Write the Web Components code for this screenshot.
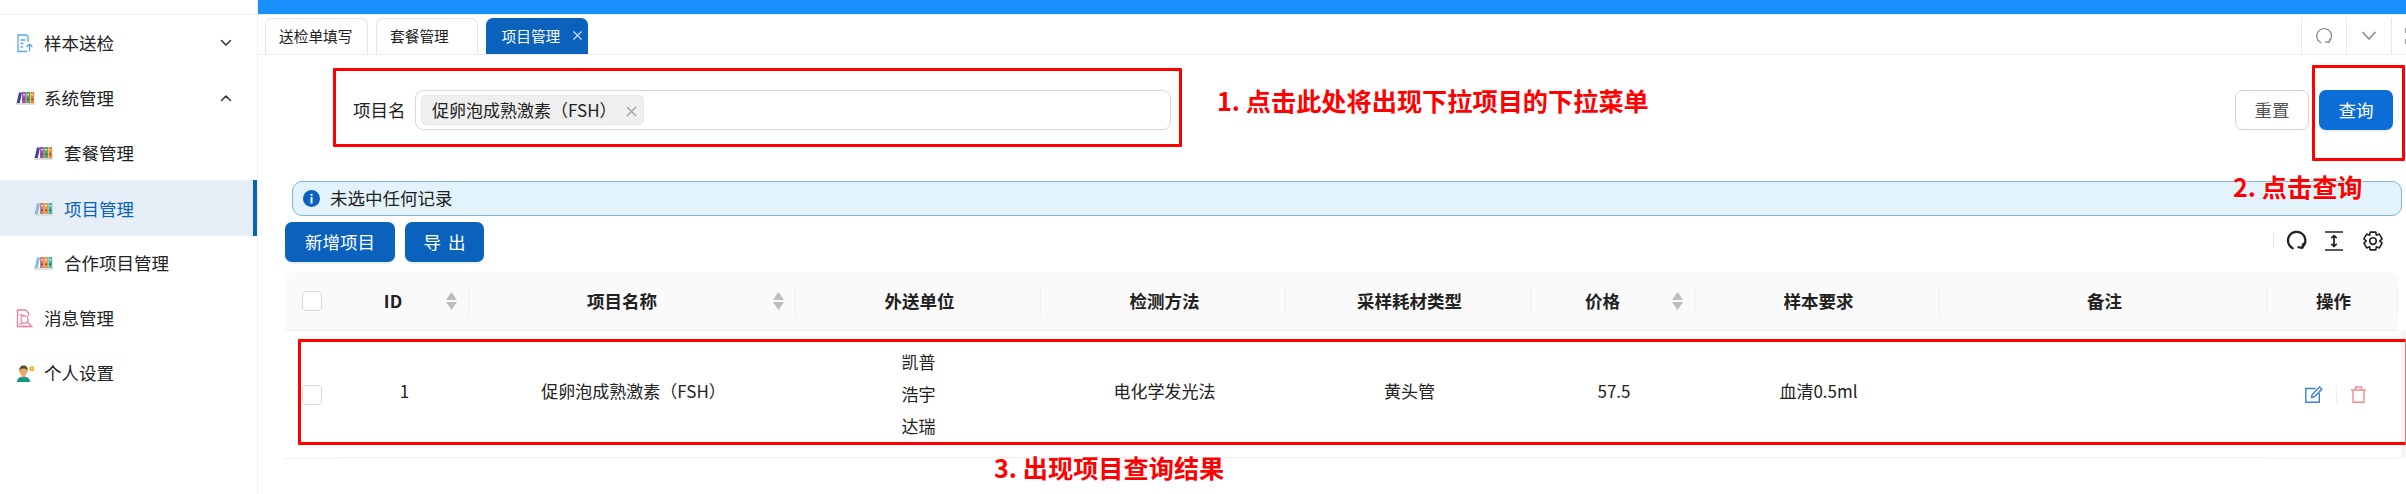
<!DOCTYPE html>
<html lang="zh">
<head>
<meta charset="utf-8">
<title>项目管理</title>
<style>
html,body{margin:0;padding:0;background:#fff}
</style>
</head>
<body>
<app-shell>
  <side-nav slot="side">
    <nav-item icon="doc" chevron="down">样本送检</nav-item>
    <nav-item icon="binder" chevron="up">系统管理</nav-item>
    <nav-item icon="binder" sub>套餐管理</nav-item>
    <nav-item icon="binder-light" sub active>项目管理</nav-item>
    <nav-item icon="binder-light" sub>合作项目管理</nav-item>
    <nav-item icon="search-doc">消息管理</nav-item>
    <nav-item icon="person">个人设置</nav-item>
  </side-nav>
  <top-strip slot="main"></top-strip>
  <tab-bar slot="main">
    <tab-chip w="103">送检单填写</tab-chip>
    <tab-chip w="102">套餐管理</tab-chip>
    <tab-chip w="102" active>项目管理</tab-chip>
  </tab-bar>
  <filter-form slot="main"></filter-form>
  <alert-bar slot="main">未选中任何记录</alert-bar>
  <action-bar slot="main"></action-bar>
  <data-table slot="main"></data-table>

  <red-box style="left:333px;top:68px;width:849px;height:79px"></red-box>
  <red-box style="left:2312px;top:65px;width:93px;height:96px"></red-box>
  <red-box style="left:298px;top:339px;width:2108px;height:106px;border-right:1px solid #e77"></red-box>
  <red-note style="left:1217px;top:101px">1. 点击此处将出现下拉项目的下拉菜单</red-note>
  <red-note style="left:2233px;top:187px">2. 点击查询</red-note>
  <red-note style="left:994px;top:468px">3. 出现项目查询结果</red-note>
</app-shell>
<script>
const FONT = '"Noto Sans CJK SC","Noto Sans",sans-serif';
const CTL = 'display:block';

function binder(a,b,c,d,e,base){
  return `<svg width="19" height="13" viewBox="0 0 19 13" style="${CTL}">
    <path d="M3 .5h3L3.800 11H.6z" fill="${a}"/><rect x="6" y="0" width="3.800" height="11" fill="${b}"/>
    <rect x="10.200" y="0" width="3.800" height="11" fill="${c}"/><rect x="14.400" y="0" width="3.800" height="11" fill="${d}"/>
    <rect x="7" y="2" width="1.800" height="1.400" fill="#fff" opacity=".8"/><rect x="11.200" y="2" width="1.800" height="1.400" fill="#fff" opacity=".8"/><rect x="15.400" y="2" width="1.800" height="1.400" fill="#fff" opacity=".8"/>
    <rect x="7" y="6.500" width="1.800" height="1.600" fill="${e}"/><rect x="11.200" y="6.500" width="1.800" height="1.600" fill="${e}"/><rect x="15.400" y="6.500" width="1.800" height="1.600" fill="${e}"/>
    <rect x="0" y="11" width="19" height="1.800" fill="${base}"/></svg>`;
}
const ICONS = {
  doc:`<svg width="18" height="19" viewBox="0 0 18 19" fill="none" stroke="#5ba2f2" stroke-width="1.3" style="${CTL}">
    <path d="M12 8V2.6L10.2 1H2v16.5h9"/><path d="M4.5 6h5M4.5 9.5h3M4.5 13h2.5"/><path d="M13.5 17.5V10.5M10.6 13l2.9-2.9 2.9 2.9"/></svg>`,
  binder:binder('#3f4192','#a24fb2','#5aa64f','#e58a3a','#555','#d9d4d0'),
  'binder-light':binder('#86bcdc','#e2786f','#e2a04d','#4fb3a6','#555','#d8dde2'),
  'search-doc':`<svg width="18" height="19" viewBox="0 0 18 19" fill="none" stroke="#ec7f9c" stroke-width="1.3" style="${CTL}">
    <path d="M11 17.5H1.5V1h8l3 3v3"/><circle cx="8.5" cy="10.5" r="3.6"/><path d="M11.2 13l4.5 4.5H7"/><path d="M3.5 6h4M3.5 15h3"/></svg>`,
  person:`<svg width="19" height="18" viewBox="0 0 19 18" style="${CTL}">
    <path d="M1 17c0-3.5 2.6-5.2 6.5-5.2S14 13.500 14 17z" fill="#0f9787"/>
    <rect x="5.800" y="9" width="3.400" height="3.500" fill="#d99a5e"/>
    <ellipse cx="7.500" cy="6.200" rx="3.900" ry="4.400" fill="#eca867"/>
    <path d="M3.400 6.500C2.800 2.200 5.200 .5 7.700 .5c2.700 0 4.500 2 3.900 5.300C10.800 3.700 9 3.400 7 3.500 5 3.500 3.900 4.400 3.400 6.500z" fill="#5b4636"/>
    <circle cx="15.800" cy="3.800" r="2.500" fill="#f6ad1b"/><circle cx="15.800" cy="3.800" r="1" fill="#ffe27a"/></svg>`
};
const RELOAD = (c,s,w)=>`<svg width="${s}" height="${s}" viewBox="0 0 20 20" fill="none" stroke="${c}" stroke-width="${w}" stroke-linecap="round" stroke-linejoin="round" style="${CTL}">
  <path d="M6.500 17.500A8.300 8.300 0 1 1 15.600 16.300"/><path d="M16.500 13.200l-1 3.800-3.700-.6"/></svg>`;
function gearPath(cx,cy){
  let d='';const n=6,R=10.2,r=7.6;
  for(let i=0;i<n;i++){
    const a=(i*60-90)*Math.PI/180,w=.30,v=.50;
    const p=(rad,ang)=>`${(cx+rad*Math.cos(ang)).toFixed(2)} ${(cy+rad*Math.sin(ang)).toFixed(2)}`;
    d+=(i?'L':'M')+p(r,a-v)+'L'+p(R,a-w)+'L'+p(R,a+w)+'L'+p(r,a+v);
    d+='Q'+p(r*.93,a+Math.PI/6)+' '+p(r,a+Math.PI/3-v);
  }
  return d+'Z';
}

const def=(name,render)=>customElements.define(name,class extends HTMLElement{
  connectedCallback(){
    if(this.shadowRoot) return;
    this.attachShadow({mode:'open'}).innerHTML=render(this);
  }
});

def('app-shell',()=>`<style>
  :host{display:flex;position:relative;width:2406px;height:494px;overflow:hidden;background:#fff;color:#222;
    font-family:${FONT};font-size:17px;line-height:1.4}
  .side{flex:0 0 257px;display:block}
  .main{flex:1;min-width:0;display:flex;flex-direction:column}
</style>
<div class="side"><slot name="side"></slot></div>
<div class="main"><slot name="main"></slot></div>
<slot></slot>`);

def('side-nav',()=>`<style>
  :host{display:block;width:258px;box-sizing:border-box;height:494px;border-right:1px solid #f1f1f1;background:#fff;padding-top:15px;position:relative}
  :host::before{content:"";position:absolute;left:0;right:0;top:14px;height:1px;background:#eee}
</style><slot></slot>`);

def('nav-item',el=>{
  const sub=el.hasAttribute('sub'),active=el.hasAttribute('active'),ch=el.getAttribute('chevron');
  const chev=ch?`<svg class="chev" width="12" height="8" viewBox="0 0 12 8" fill="none" stroke="#333" stroke-width="1.5" stroke-linecap="round" stroke-linejoin="round"><path d="${ch==='down'?'M1.500 1.500L6 6l4.500-4.500':'M1.500 6.500L6 2l4.500 4.500'}"/></svg>`:'';
  return `<style>
    :host{display:flex;align-items:center;height:55px;box-sizing:border-box;position:relative;font-size:17.5px;padding-top:2px;
      padding-left:${sub?34:16}px;color:${active?'#0a62bd':'#222'};background:${active?'#e6eff8':'transparent'};
      ${active?'border-right:4px solid #0a62bd;width:257px;height:56px;margin-bottom:-1px;':''}}
    .ic{width:${sub?30:28}px;flex:none}
    .chev{position:absolute;left:220px;top:50%;margin-top:-4px}
  </style><span class="ic">${ICONS[el.getAttribute('icon')]}</span><slot></slot>${chev}`;
});

def('top-strip',()=>`<style>:host{display:block;height:14px;background:#1890ff;border-bottom:1px solid #eee;flex:none}</style>`);

def('tab-bar',()=>`<style>
  :host{display:flex;align-items:flex-end;height:39px;box-sizing:content-box;border-bottom:1px solid #eee;padding-left:7px;gap:8px;flex:none;margin-left:0}
  .tools{margin-left:auto;margin-right:-30px;display:flex;height:36px}
  .tools span{width:45px;box-sizing:border-box;border-left:1px solid #e8e8e8;display:flex;align-items:center;justify-content:center}
</style><slot></slot>
<div class="tools">
  <span>${RELOAD('#8a93a3',18,1.5)}</span>
  <span><svg width="16" height="10" viewBox="0 0 16 10" fill="none" stroke="#8a93a3" stroke-width="1.800" stroke-linecap="round" stroke-linejoin="round"><path d="M2 1.500L8 8l6-6.500"/></svg></span>
  <span><svg width="18" height="16" viewBox="0 0 18 16" fill="none" stroke="#8a93a3" stroke-width="1.800" style="${CTL}"><path d="M1 5V1h4M13 1h4v4M1 11v4h4M13 15h4v-4"/></svg></span>
</div>`);

def('tab-chip',el=>{
  const a=el.hasAttribute('active');
  return `<style>
    :host{display:flex;align-items:center;box-sizing:border-box;width:${el.getAttribute('w')}px;height:36px;padding:0 0 1px ${a?14.5:13}px;font-size:14.700px;
      border:1px solid ${a?'#0a62bd':'#e4e4e4'};border-bottom:0;border-radius:7px 7px 0 0;
      background:${a?'#0a62bd':'#fff'};color:${a?'#fff':'#222'};position:relative}
    svg{position:absolute;left:85px;top:11px}
  </style><slot></slot>${a?'<svg width="11" height="11" viewBox="0 0 11 11" stroke="#cfe2f7" stroke-width="1.200"><path d="M1.500 1.500l8 8M9.500 1.500l-8 8"/></svg>':''}`;
});

def('app-button',el=>{
  const k=el.getAttribute('kind');
  const st={primary:'background:#0a62bd;color:#fff;border:0;box-shadow:0 2px 0 #e8f3fd;',
    query:'background:#0d6dd6;color:#fff;border:0;box-shadow:0 2px 0 #e8f3fd;',
    ghost:'background:#fff;color:#555;border:1px solid #d4d4d4;'}[k];
  return `<style>:host{display:inline-flex;align-items:center;justify-content:center;box-sizing:border-box;height:40px;
    width:${el.getAttribute('w')}px;border-radius:7px;font-size:17.500px;word-spacing:3px;flex:none;${st}}</style><slot></slot>`;
});

def('filter-form',()=>`<style>
  :host{display:flex;align-items:center;height:40px;padding:35px 13px 51px 95px;flex:none}
  label{width:62px;flex:none;font-size:17.500px}
  .box{width:756px;height:40px;box-sizing:border-box;border:1px solid #d8d8d8;border-radius:8px;padding:4px 5px;display:flex;flex:none}
  .tag{width:223px;height:30px;box-sizing:border-box;background:#efefef;border:1px solid #e6e6e6;border-radius:5px;display:flex;align-items:center;padding-left:10px;font-size:17px;white-space:nowrap;position:relative}
  .tag svg{position:absolute;left:204px;top:10px}
  .btns{margin-left:auto;display:flex;gap:10px}
</style>
<label>项目名</label>
<div class="box"><span class="tag">促卵泡成熟激素（FSH）<svg width="11" height="11" viewBox="0 0 11 11" stroke="#999" stroke-width="1.100"><path d="M1 1l9 9M10 1l-9 9"/></svg></span></div>
<div class="btns"><app-button kind="ghost" w="74">重置</app-button><app-button kind="query" w="74">查询</app-button></div>`);

def('alert-bar',()=>`<style>
  :host{display:flex;align-items:center;gap:10px;height:35px;box-sizing:border-box;margin:0 4px 0 34px;padding-left:10px;
    background:#e2f3fc;border:1px solid #82b4dc;border-radius:10px;font-size:17.500px;flex:none}
  svg{flex:none}
</style><svg width="17" height="17" viewBox="0 0 17 17"><circle cx="8.500" cy="8.500" r="8.500" fill="#0a62bd"/><rect x="7.500" y="7" width="2" height="6.500" fill="#fff"/><rect x="7.500" y="3.800" width="2" height="2" fill="#fff"/></svg><slot></slot>`);

def('action-bar',()=>`<style>
  :host{display:flex;align-items:center;height:40px;margin:6px 8px 0 27px;gap:10px;flex:none}
  .icons{margin-left:auto;display:flex;align-items:center;height:22px;margin-top:-3px;padding-right:14px}
  .sep{width:1px;height:15px;background:#e8e8e8;margin-right:12px}
</style>
<app-button kind="primary" w="110">新增项目</app-button>
<app-button kind="primary" w="79">导 出</app-button>
<div class="icons"><span class="sep"></span>
  ${RELOAD('#222',21,2.100)}
  <svg width="18" height="20" viewBox="0 0 18 20" fill="none" stroke="#222" stroke-width="1.700" stroke-linecap="round" stroke-linejoin="round" style="display:block;margin-left:18px"><path d="M0 1h18M0 19h18" stroke-linecap="butt"/><path d="M9 4.500v11M6.800 6.700L9 4.500l2.200 2.200M6.800 13.300L9 15.500l2.200-2.200"/></svg>
  <svg width="22" height="22" viewBox="0 0 24 24" fill="none" stroke="#222" stroke-width="1.800" stroke-linejoin="round" style="display:block;margin-left:19px"><path d="${gearPath(12,12)}"/><circle cx="12" cy="12" r="3.600"/></svg>
</div>`);

def('data-table',()=>{
  const cols=[
    {w:53,cb:1},{w:131,t:'ID',s:1,v:'1'},{w:327,t:'项目名称',s:1,v:'促卵泡成熟激素（FSH）'},
    {w:245,t:'外送单位',m:['凯普','浩宇','达瑞']},{w:245,t:'检测方法',v:'电化学发光法'},
    {w:245,t:'采样耗材类型',v:'黄头管'},{w:164,t:'价格',s:1,v:'57.5'},{w:245,t:'样本要求',v:'血清0.5ml'},
    {w:327,t:'备注',v:''},{w:131,t:'操作',a:1}];
  const sort=`<svg class="sort" width="11" height="18" viewBox="0 0 11 18" fill="#bdbdbd"><path d="M5.500 0L11 8H0zM5.500 18L0 10h11z"/></svg>`;
  const edit=`<svg width="18" height="17" viewBox="0 0 18 17" fill="none" stroke="#3f82d2" stroke-width="1.400" style="${CTL}"><path d="M10.500 2.500H.8v13.700h13.500V7"/><path d="M6.500 11.500l.6-3L14.500 1l2.300 2.300-7.400 7.500z"/></svg>`;
  const del=`<svg width="15" height="17" viewBox="0 0 15 17" fill="none" stroke="#f28a90" stroke-width="1.400" style="${CTL}"><path d="M0 4h15M4.500 4V1h6v3M2 4v12.300h11V4"/></svg>`;
  const head=cols.map(c=>`<div class="th">${c.cb?'<i class="cb"></i>':`<span class="tt">${c.t}</span>${c.s?sort:''}`}</div>`).join('');
  const row=cols.map((c,i)=>{
    let inner='';
    if(c.cb) inner='<i class="cb"></i>';
    else if(c.m) inner=`<div class="multi">${c.m.map(x=>`<div>${x}</div>`).join('')}</div>`;
    else if(c.a) inner=`<div class="ops">${edit}<b></b>${del}</div>`;
    else inner=`<span class="one">${c.v}</span>`;
    return `<div class="td ${i===0||i===cols.length-1?'edge':''}">${inner}</div>`;
  }).join('');
  return `<style>
    :host{display:flex;gap:3px;flex:none;margin:10px 0 0 27px}
    .grid{display:grid;grid-template-columns:${cols.map(c=>c.w+'px').join(' ')};grid-template-rows:59px 127px;flex:none;font-size:17px}
    .th{background:#fafafa;border-bottom:1px solid #eee;display:flex;align-items:center;justify-content:center;position:relative;font-weight:700;font-size:17.500px;box-sizing:border-box}
    .th:first-child{border-top-left-radius:8px}
    .th:nth-child(10){border-top-right-radius:8px}
    .th+.th::after{content:"";position:absolute;right:0;top:15px;height:28px;width:1px;background:#eee}
    .th:first-child::after{display:none}
    .tt{flex:1;text-align:center;padding-left:2px}
    .sort{flex:none;margin:0 12px 0 0}
    .td{border-bottom:1px solid #eee;display:flex;align-items:center;justify-content:center;box-sizing:border-box;height:127px}
    .td.edge{height:128px;align-self:start}
    .one{padding-bottom:6px;padding-left:2px}
    .multi{text-align:center;line-height:32px}
    .cb{display:block;width:20px;height:20px;box-sizing:border-box;border:1px solid #d9d9d9;border-radius:4px;background:#fff}
    .ops{display:flex;align-items:center;margin-left:5px}
    .ops b{width:1px;height:17px;background:#eee;margin:0 14px 0 13px}
    .strip{width:5px;height:127px;margin-top:59px;background:#f5f5f5}
  </style><div class="grid">${head}${row}</div><div class="strip"></div>`;
});

def('red-box',()=>`<style>:host{position:absolute;box-sizing:border-box;border:3px solid #f00;border-radius:1px;pointer-events:none}</style>`);
def('red-note',()=>`<style>:host{position:absolute;transform:translateY(-50%);color:#f00;font-weight:700;font-size:25.200px;line-height:1;white-space:nowrap;text-shadow:0 0 2px #fff,0 0 2px #fff}</style><slot></slot>`);
</script>
</body>
</html>
